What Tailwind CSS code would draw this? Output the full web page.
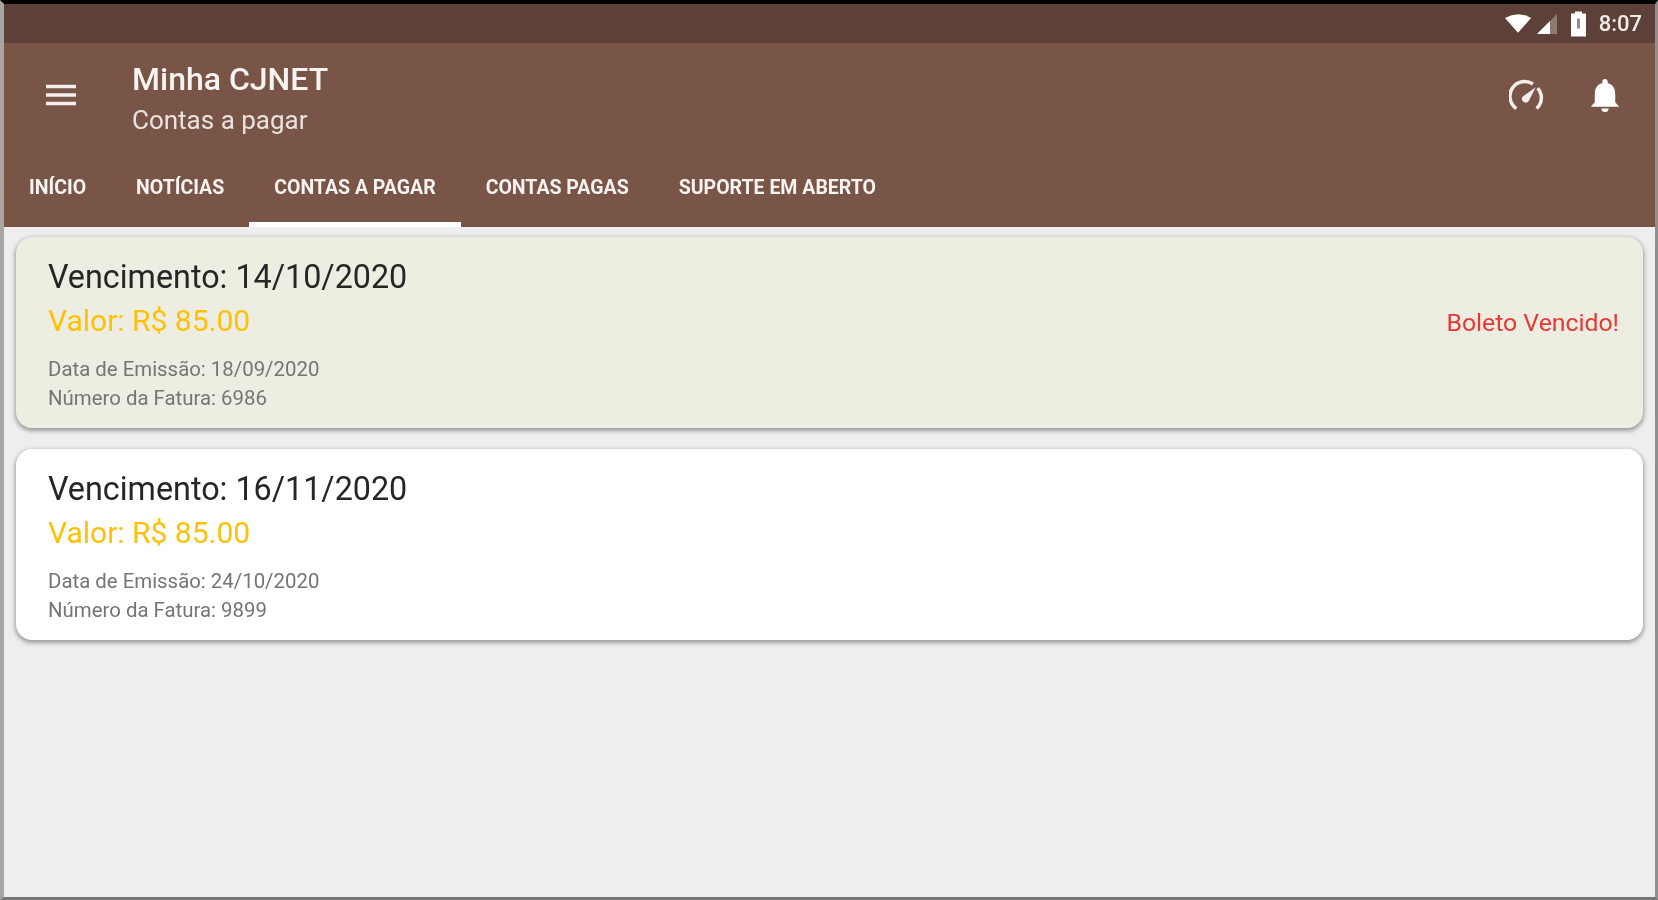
<!DOCTYPE html>
<html lang="pt-BR">
<head>
  <meta charset="UTF-8" />
  <meta name="viewport" content="width=device-width, initial-scale=1.0" />
  <title>Minha CJNET</title>
  <script src="https://cdn.jsdelivr.net/npm/@tailwindcss/browser@4"></script>
</head>
<body class="bg-[#eeeeee] overflow-hidden">
  <div class="w-[1658px] h-[900px] flex flex-col bg-[#eeeeee] border-t-4 border-t-black border-l-4 border-l-[#a9a5a3] border-r-[3px] border-r-[#8f8f8f] border-b-[3px] border-b-[#777777] font-['Roboto',sans-serif] overflow-hidden">

    <!-- status bar -->
    <div class="h-[39px] shrink-0 bg-[#5d4037] flex items-center justify-end pr-[13px] blur-[0.7px]">
      <svg class="w-[28px] h-[21px] mr-[4px]" viewBox="0 0 30 22"><path d="M1 5 Q15 -3 29 5 L15 21 Z" fill="#ffffff"/></svg>
      <svg class="w-[22px] h-[22px] mr-[13px]" viewBox="0 0 22 22"><path d="M1 21 L21 1 V21 Z" fill="#ffffff" fill-opacity="0.3"/><path d="M1 21 L14 8 V21 Z" fill="#ffffff"/></svg>
      <svg class="w-[15px] h-[26px] mr-[13px]" viewBox="0 0 15 25"><path d="M4 2 V0 H11 V2 H15 V25 H0 V2 Z" fill="#ffffff"/><path d="M6 7 H9 V17 H6 Z" fill="#9a8a85"/></svg>
      <span class="text-[22px] font-medium text-[#f1eceb] leading-none">8:07</span>
    </div>

    <!-- app bar -->
    <div class="h-[184px] shrink-0 bg-[#795548] flex flex-col">
      <div class="h-[96px] flex items-center blur-[0.7px]">
        <div class="w-[128px] pl-[41px] pt-[8px] shrink-0">
          <svg class="block w-[32px] h-[24px]" viewBox="0 0 32 24"><path d="M1 3.5 H31 M1 12 H31 M1 20.5 H31" stroke="#f4efed" stroke-width="3.4" fill="none"/></svg>
        </div>
        <div class="flex-1 pt-[14px]">
          <div class="text-[32px] font-medium text-[#f7f3f1] leading-[38px]">Minha CJNET</div>
          <div class="text-[26px] text-[#e9e2df] leading-[32px] mt-[6px]">Contas a pagar</div>
        </div>
        <svg class="w-[35px] h-[35px] mr-[45px] mt-[10px]" viewBox="0 0 38 38" fill="none"><path d="M8 32 A15.5 15.500 0 0 1 26 5.5 M31 10 A15.5 15.500 0 0 1 30 32" stroke="#f4efed" stroke-width="3.8"/><path d="M29 9 L21.5 24 A4 4 0 0 1 15 19 Z" fill="#f4efed"/></svg>
        <svg class="w-[32px] h-[36px] mr-[34px] mt-[10px]" viewBox="0 0 36 40"><path d="M18 1 a3 3 0 0 1 3 3 v1.5 C27 7 29.5 12 29.5 18 V27 L34 32 H2 L6.500 27 V18 C6.500 12 9 7 15 5.500 V4 a3 3 0 0 1 3 -3 Z M14 34 H22 a4 4 0 0 1 -8 0 Z" fill="#ffffff"/></svg>
      </div>
      <div class="flex-1 flex items-stretch text-[19.5px] font-bold uppercase text-[#f7f3f1] blur-[0.6px]">
        <div class="px-[25px] flex items-center pt-[9px]">Início</div>
        <div class="px-[25px] flex items-center pt-[9px]">Notícias</div>
        <div class="px-[25px] flex items-center pt-[14px] border-b-[5px] border-white">Contas a pagar</div>
        <div class="px-[25px] flex items-center pt-[9px]">Contas pagas</div>
        <div class="px-[25px] flex items-center pt-[9px]">Suporte em aberto</div>
      </div>
    </div>

    <!-- lista de contas -->
    <div class="flex-1 pt-[10px] pl-[12px] pr-[12px] flex flex-col gap-[21px]">
      <div class="h-[191px] rounded-[16px] bg-[#eeede1] shadow-[0_2px_4px_1px_rgba(0,0,0,0.35)] flex items-center justify-between pl-[32px] pr-[24px] blur-[0.6px]">
        <div class="pt-[2px]">
          <div class="text-[32.3px] text-[#262626] leading-[44px]">Vencimento: 14/10/2020</div>
          <div class="text-[30px] text-[#ffc107] leading-[44px]">Valor: R$ 85.00</div>
          <div class="text-[20.4px] text-[#757575] leading-[29px] mt-[12px]">Data de Emissão: 18/09/2020</div>
          <div class="text-[20.4px] text-[#757575] leading-[29px]">Número da Fatura: 6986</div>
        </div>
        <div class="text-[24.8px] text-[#e53935] pb-[19px]">Boleto Vencido!</div>
      </div>
      <div class="h-[191px] rounded-[16px] bg-white shadow-[0_2px_4px_1px_rgba(0,0,0,0.35)] flex items-center pl-[32px] pr-[24px] blur-[0.6px]">
        <div class="pt-[2px]">
          <div class="text-[32.3px] text-[#262626] leading-[44px]">Vencimento: 16/11/2020</div>
          <div class="text-[30px] text-[#ffc107] leading-[44px]">Valor: R$ 85.00</div>
          <div class="text-[20.4px] text-[#757575] leading-[29px] mt-[12px]">Data de Emissão: 24/10/2020</div>
          <div class="text-[20.4px] text-[#757575] leading-[29px]">Número da Fatura: 9899</div>
        </div>
      </div>
    </div>
  </div>
</body>
</html>
